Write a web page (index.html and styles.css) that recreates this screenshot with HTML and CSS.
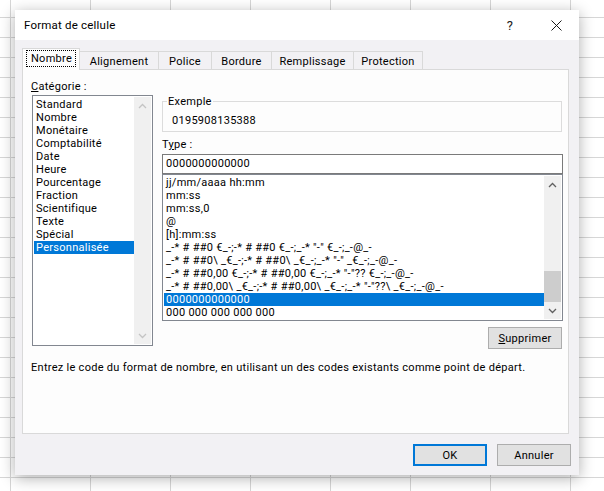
FILE: index.html
```html
<!DOCTYPE html>
<html lang="fr">
<head>
<meta charset="utf-8">
<title>Format de cellule</title>
<link rel="stylesheet" href="styles.css">
</head>
<body>
<div class="dialog">
  <div class="titlebar">
    <span class="title">Format de cellule</span>
    <span class="tb-btn help">?</span>
    <span class="tb-btn close">
      <svg width="11" height="11" viewBox="0 0 11 11"><path d="M0.5 0.5 L10.5 10.5 M10.5 0.5 L0.5 10.5" stroke="#1a1a1a" stroke-width="1" fill="none"/></svg>
    </span>
  </div>
  <div class="body">
    <div class="tabs">
      <div class="tab active t-nombre"><span class="focus">Nombre</span></div>
      <div class="tab t-align">Alignement</div>
      <div class="tab t-police">Police</div>
      <div class="tab t-bordure">Bordure</div>
      <div class="tab t-rempl">Remplissage</div>
      <div class="tab t-prot">Protection</div>
    </div>
    <div class="panel">
      <div class="cols">
        <div class="left">
          <div class="label"><u>C</u>atégorie :</div>
          <div class="listbox catlist">
            <div class="items">
              <div class="item">Standard</div>
              <div class="item">Nombre</div>
              <div class="item">Monétaire</div>
              <div class="item">Comptabilité</div>
              <div class="item">Date</div>
              <div class="item">Heure</div>
              <div class="item">Pourcentage</div>
              <div class="item">Fraction</div>
              <div class="item">Scientifique</div>
              <div class="item">Texte</div>
              <div class="item">Spécial</div>
              <div class="item selected">Personnalisée</div>
            </div>
            <div class="vscroll disabled">
              <div class="arrow"><svg width="9" height="6" viewBox="0 0 9 6"><path d="M1 5 L4.5 1.5 L8 5" /></svg></div>
              <div class="track"></div>
              <div class="arrow"><svg width="9" height="6" viewBox="0 0 9 6"><path d="M1 1 L4.5 4.5 L8 1" /></svg></div>
            </div>
          </div>
        </div>
        <div class="right">
          <fieldset class="example">
            <legend>Exemple</legend>
            <div class="sample">0195908135388</div>
          </fieldset>
          <div class="label type-label">T<u>y</u>pe :</div>
          <div class="input">0000000000000</div>
          <div class="listbox fmtlist">
            <div class="items">
              <div class="item">jj/mm/aaaa hh:mm</div>
              <div class="item">mm:ss</div>
              <div class="item">mm:ss,0</div>
              <div class="item">@</div>
              <div class="item">[h]:mm:ss</div>
              <div class="item">_-* # ##0 €_-;-* # ##0 €_-;_-* "-" €_-;_-@_-</div>
              <div class="item">_-* # ##0\ _€_-;-* # ##0\ _€_-;_-* "-" _€_-;_-@_-</div>
              <div class="item">_-* # ##0,00 €_-;-* # ##0,00 €_-;_-* "-"?? €_-;_-@_-</div>
              <div class="item">_-* # ##0,00\ _€_-;-* # ##0,00\ _€_-;_-* "-"??\ _€_-;_-@_-</div>
              <div class="item selected">0000000000000</div>
              <div class="item">000 000 000 000 000</div>
            </div>
            <div class="vscroll">
              <div class="arrow"><svg width="9" height="6" viewBox="0 0 9 6"><path d="M1 5 L4.5 1.5 L8 5" /></svg></div>
              <div class="track"><div class="thumb"></div></div>
              <div class="arrow"><svg width="9" height="6" viewBox="0 0 9 6"><path d="M1 1 L4.5 4.5 L8 1" /></svg></div>
            </div>
          </div>
          <div class="btnrow"><button class="btn"><u>S</u>upprimer</button></div>
        </div>
      </div>
      <p class="desc">Entrez le code du format de nombre, en utilisant un des codes existants comme point de départ.</p>
    </div>
    <div class="footer">
      <button class="btn default">OK</button>
      <button class="btn">Annuler</button>
    </div>
  </div>
</div>
</body>
</html>
```
FILE: styles.css
```css
* { box-sizing: border-box; }
html, body { margin: 0; height: 100%; }
body {
  overflow: hidden;
  padding: 10px 0 0 15px;
  background-color: #ffffff;
  background-image:
    linear-gradient(to right, #d6d6d6 1px, transparent 1px),
    linear-gradient(to bottom, #d6d6d6 1px, transparent 1px);
  background-size: 80px 20px;
  background-position: 10px 17px;
  font-family: Roboto, "Noto Sans", sans-serif;
  font-size: 11px;
  letter-spacing: 0.28px;
  line-height: 13px;
  color: #000;
}
.dialog {
  width: 564px;
  height: 465px;
  background: #f2f1f4;
  box-shadow: 0 3px 14px rgba(0,0,0,0.32);
  display: flex;
  flex-direction: column;
}
.titlebar {
  height: 30px;
  background: #ffffff;
  display: flex;
  align-items: center;
  padding-left: 9px;
  flex: none;
}
.title { flex: 1; font-size: 11.5px; letter-spacing: 0.2px; }
.tb-btn {
  width: 46px;
  height: 30px;
  display: flex;
  align-items: center;
  justify-content: center;
  font-size: 13px;
  color: #1a1a1a;
}
.body {
  flex: 1;
  padding: 8px 10px 0 7px;
  display: flex;
  flex-direction: column;
}
.tabs {
  display: flex;
  align-items: flex-end;
  height: 22px;
  margin-bottom: -1px;
  position: relative;
  z-index: 1;
}
.tab {
  height: 18px;
  margin-bottom: 1px;
  margin-left: -1px;
  border: 1px solid #d9d9d9;
  border-bottom: none;
  background: #f2f1f4;
  display: flex;
  align-items: center;
  justify-content: center;
  padding-top: 1px;
}
.tab.active {
  height: 22px;
  margin-bottom: 0;
  margin-left: 0;
  background: #fdfdfd;
  position: relative;
  z-index: 2;
  padding-top: 0;
  padding-bottom: 2px;
}
.focus {
  border: 1px dotted #000;
  padding: 1px 3px 1px 4px;
  line-height: 13px;
}
.t-nombre { width: 58px; }
.t-align { width: 80px; }
.t-police { width: 54px; }
.t-bordure { width: 61px; }
.t-rempl { width: 83px; }
.t-prot { width: 70px; }
.panel {
  height: 365px;
  border: 1px solid #d9d9d9;
  background: #fdfdfd;
  padding: 10px 8px 0 8px;
  flex: none;
}
.cols { display: flex; gap: 9px; align-items: flex-start; }
.left { width: 122px; }
.label { height: 13px; }
.listbox {
  border: 1px solid #828790;
  background: #fff;
  display: flex;
  padding: 1px;
  overflow: hidden;
}
.catlist {
  margin-left: 1px;
  margin-top: 2px;
  width: 121px;
  height: 251px;
}
.items { flex: 1; padding-top: 1px; overflow: hidden; }
.item {
  height: 13px;
  line-height: 13px;
  padding-left: 2px;
  white-space: nowrap;
}
.item.selected { background: #0078d7; color: #fff; }
.vscroll {
  width: 17px;
  flex: none;
  background: #f0f0f0;
  display: flex;
  flex-direction: column;
}
.arrow {
  height: 17px;
  display: flex;
  align-items: center;
  justify-content: center;
  flex: none;
}
.arrow svg path { fill: none; stroke: #606060; stroke-width: 1.3; }
.disabled .arrow svg path { stroke: #c4c4c4; }
.track { flex: 1; display: flex; flex-direction: column; justify-content: flex-end; }
.thumb { height: 31px; background: #cdcdcd; }
.right { width: 401px; margin-top: 15px; }
.example {
  margin: 0;
  height: 37px;
  border: 1px solid #dcdcdc;
  padding: 0 4px;
  min-width: 0;
  width: 400px;
}
.example legend { padding: 0 1px; line-height: 13px; }
.sample { margin: 6px 0 0 5px; line-height: 13px; }
.type-label { margin-top: 6px; }
.input {
  margin-top: 3px;
  height: 20px;
  border: 1px solid #7a7a7a;
  background: #fff;
  padding-left: 3px;
  line-height: 18px;
}
.fmtlist { height: 147px; width: 401px; }
.fmtlist .items { padding-top: 0; }
.btnrow { display: flex; justify-content: flex-end; margin-top: 6px; padding-right: 1px; }
.btn {
  width: 74px;
  height: 22px;
  background: #e1e1e1;
  border: 1px solid #adadad;
  font-family: inherit;
  font-size: 11px;
  letter-spacing: 0.28px;
  color: #000;
  padding: 0;
  margin: 0;
}
.btn.default { border: 2px solid #0078d7; }
.desc { margin: 12px 0 0 0; line-height: 13px; }
.footer {
  display: flex;
  justify-content: flex-end;
  gap: 10px;
  margin-top: 10px;
  margin-right: -2px;
}
```
